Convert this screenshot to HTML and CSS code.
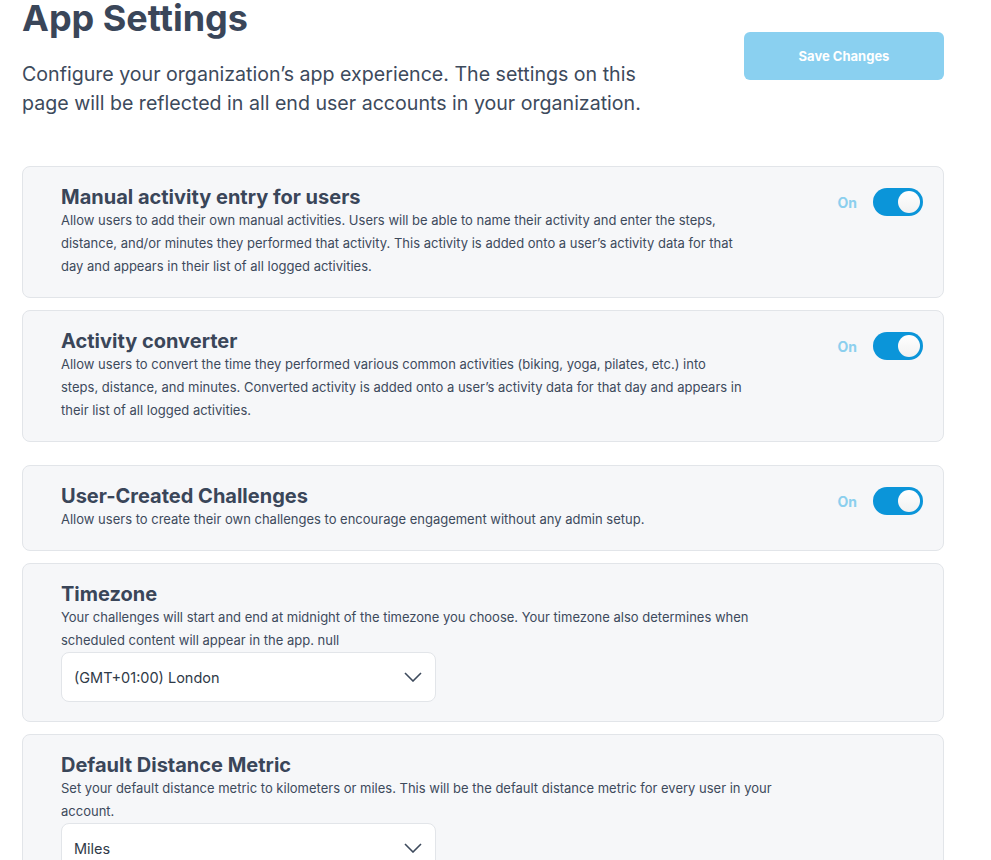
FILE: index.html
```html
<!DOCTYPE html>
<html lang="en">
<head>
    <meta charset="UTF-8">
    <meta name="viewport" content="width=device-width, initial-scale=1.0">
    <title>App Settings</title>
    <link rel="stylesheet" href="styles.css">
</head>
<body>

    <div class="page">
        <div class="page-header">
            <div class="intro">
                <h1>App Settings</h1>
                <p>Configure your organization’s app experience. The settings on this page will be reflected in all end user accounts in your organization.</p>
            </div>
            <button class="save-button" disabled>Save Changes</button>
        </div>

        <div class="settings">
            <div class="setting-card">
                <div class="setting-text">
                    <h2>Manual activity entry for users</h2>
                    <p>Allow users to add their own manual activities. Users will be able to name their activity and enter the steps, distance, and/or minutes they performed that activity. This activity is added onto a user’s activity data for that day and appears in their list of all logged activities.</p>
                </div>
                <label class="toggle">
                    <span class="toggle-label">On</span>
                    <input type="checkbox" checked>
                    <span class="switch"></span>
                </label>
            </div>

            <div class="setting-card">
                <div class="setting-text">
                    <h2>Activity converter</h2>
                    <p class="narrow">Allow users to convert the time they performed various common activities (biking, yoga, pilates, etc.) into steps, distance, and minutes. Converted activity is added onto a user’s activity data for that day and appears in their list of all logged activities.</p>
                </div>
                <label class="toggle">
                    <span class="toggle-label">On</span>
                    <input type="checkbox" checked>
                    <span class="switch"></span>
                </label>
            </div>

            <div class="setting-card spaced">
                <div class="setting-text">
                    <h2>User-Created Challenges</h2>
                    <p>Allow users to create their own challenges to encourage engagement without any admin setup.</p>
                </div>
                <label class="toggle">
                    <span class="toggle-label">On</span>
                    <input type="checkbox" checked>
                    <span class="switch"></span>
                </label>
            </div>

            <div class="setting-card">
                <div class="setting-text">
                    <h2>Timezone</h2>
                    <p>Your challenges will start and end at midnight of the timezone you choose. Your timezone also determines when scheduled content will appear in the app. null</p>
                    <div class="select">
                        <span>(GMT+01:00) London</span>
                        <svg width="18" height="10" viewBox="0 0 18 10"><path d="M1 1l8 8 8-8" fill="none" stroke="#3d4a5c" stroke-width="1.6"/></svg>
                    </div>
                </div>
            </div>

            <div class="setting-card">
                <div class="setting-text">
                    <h2>Default Distance Metric</h2>
                    <p class="wide">Set your default distance metric to kilometers or miles. This will be the default distance metric for every user in your account.</p>
                    <div class="select">
                        <span>Miles</span>
                        <svg width="18" height="10" viewBox="0 0 18 10"><path d="M1 1l8 8 8-8" fill="none" stroke="#3d4a5c" stroke-width="1.6"/></svg>
                    </div>
                </div>
            </div>
        </div>
    </div>

</body>
</html>
```

FILE: styles.css
```css
body {
    margin: 0;
    font-family: Inter, "Noto Sans", sans-serif;
    color: #3d4a5c;
    background-color: #fff;
}

.page {
    width: 922px;
    padding: 0 0 40px 22px;
}

.page-header {
    display: flex;
    justify-content: space-between;
    align-items: flex-start;
}

h1 {
    font-size: 36px;
    font-weight: 700;
    line-height: 40px;
    margin: -2px 0 0;
    color: #3a4659;
}

.intro p {
    width: 640px;
    margin: 22px 0 0;
    font-size: 19.6px;
    line-height: 29px;
}

.save-button {
    margin-top: 32px;
    width: 200px;
    height: 48px;
    border: none;
    border-radius: 6px;
    background-color: #8ad0f0;
    color: white;
    font-family: inherit;
    font-size: 13px;
    font-weight: 700;
}

.settings {
    margin-top: 48px;
    display: flex;
    flex-direction: column;
    gap: 12px;
}

.setting-card {
    display: flex;
    justify-content: space-between;
    align-items: flex-start;
    padding: 18px 20px 19px 38px;
    background-color: #f6f7f9;
    border: 1px solid #e2e5e9;
    border-radius: 8px;
}

.setting-card.spaced {
    margin-top: 11px;
}

h2 {
    margin: 0;
    font-size: 20px;
    line-height: 24px;
    font-weight: 700;
    color: #3a4659;
}

.setting-text p {
    margin: 0;
    width: 690px;
    font-size: 13px;
    line-height: 23px;
}

.setting-text p.narrow {
    width: 684px;
}

.setting-text p.wide {
    width: 716px;
}

.toggle {
    display: flex;
    align-items: center;
    gap: 16px;
    margin-top: 3px;
}

.toggle-label {
    font-size: 14px;
    font-weight: 700;
    color: #8ccfee;
}

.toggle input {
    display: none;
}

.switch {
    position: relative;
    width: 50px;
    height: 28px;
    border-radius: 14px;
    background-color: #ccd3db;
}

.switch::after {
    content: "";
    position: absolute;
    top: 3px;
    left: 3px;
    width: 22px;
    height: 22px;
    border-radius: 50%;
    background: linear-gradient(#fff, #f1f1f1);
    transition: left 0.2s;
}

.toggle input:checked + .switch {
    background-color: #0b95d9;
}

.toggle input:checked + .switch::after {
    left: 25px;
}

.select {
    display: flex;
    justify-content: space-between;
    align-items: center;
    box-sizing: border-box;
    width: 375px;
    height: 50px;
    padding: 0 13px 0 12px;
    background-color: #fff;
    border: 1px solid #e2e5e9;
    border-radius: 8px;
    font-size: 14.5px;
    color: #2f3a48;
}
```
